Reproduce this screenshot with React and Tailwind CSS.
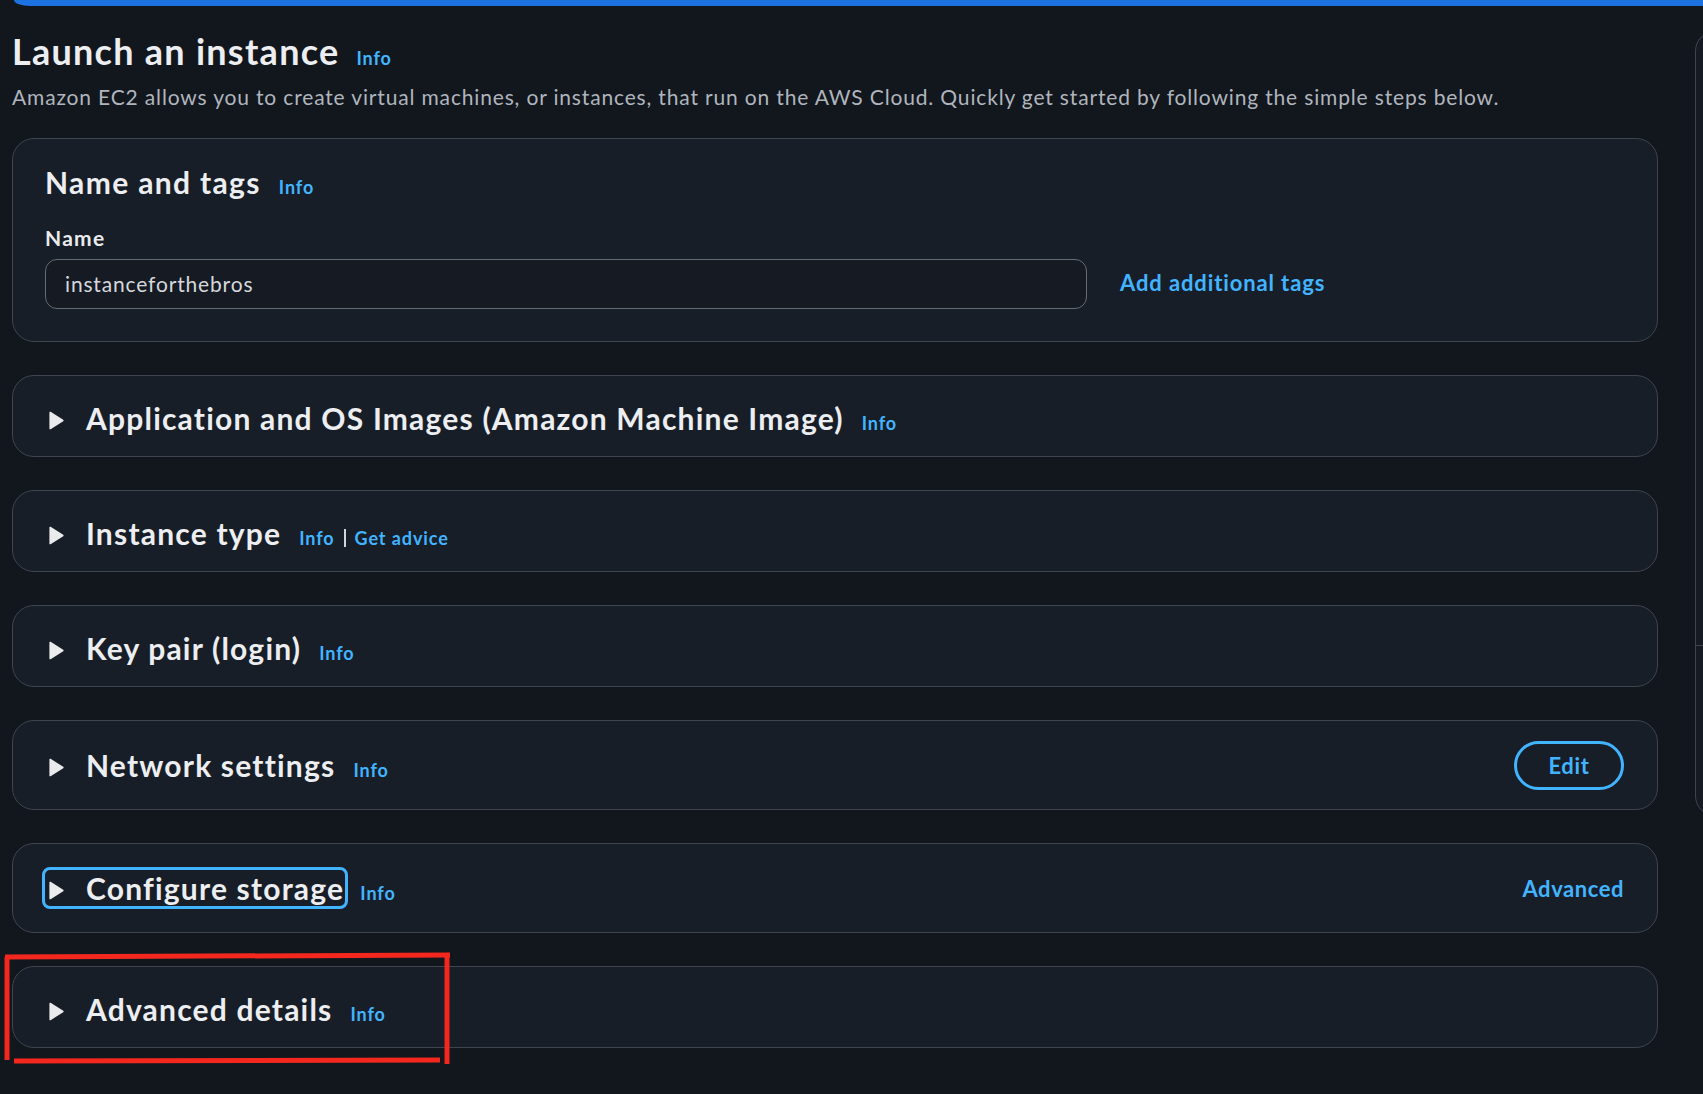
import React from 'react';

const Caret = ({ lift }) => (
  <svg width="15" height="19" viewBox="0 0 15 19" className={`shrink-0 ${lift ? 'mb-[4px]' : 'mb-[2px]'}`}>
    <path d="M1.2 1.5 L13.8 9.5 L1.2 17.5 Z" fill="#e9ebed" stroke="#e9ebed" strokeWidth="1.6" strokeLinejoin="round" />
  </svg>
);

const Info = ({ className = '' }) => (
  <span className={`text-[18px] font-bold tracking-[0.05em] text-[#42b4ff] ${className}`}>Info</span>
);

function Section({ title, focused, extra, action }) {
  // cards without a right-hand action sit their title a touch lower
  const pad = action ? 'py-[19px]' : 'pt-[21px] pb-[17px]';
  return (
    <div className={`flex items-center rounded-[22px] border border-[#3f4550] bg-[#181e27] pl-[29px] pr-[33px] ${pad}`}>
      <div className="flex items-baseline">
        <div
          className={`flex items-baseline rounded-[8px] border-[3px] pl-[4px] pr-[1px] ${
            focused ? 'border-[#42b4ff]' : 'border-transparent'
          }`}
        >
          <Caret lift={!action} />
          <span className="ml-[22px] text-[30px] font-bold leading-[36px] tracking-[0.04em] text-[#eceef1]">
            {title}
          </span>
        </div>
        <Info className={focused ? 'ml-[12px]' : 'ml-[14px]'} />
        {extra}
      </div>
      {action && <div className="ml-auto flex h-[50px] items-center">{action}</div>}
    </div>
  );
}

export default function App() {
  return (
    <div className="relative h-[1094px] w-[1703px] overflow-hidden bg-[#12171e] font-[Lato,sans-serif]">
      {/* top progress bar */}
      <div className="ml-[14px] h-[6px] rounded-bl-[16px_6px] bg-[#1b72e0]" />

      <div className="flex">
        <div className="w-[1658px] shrink-0 pl-[12px]">
          <div className="mt-[23px] flex items-baseline">
            <h1 className="text-[36px] font-bold leading-[44px] tracking-[0.035em] text-[#eceef1]">
              Launch an instance
            </h1>
            <Info className="ml-[17px]" />
          </div>
          <p className="mt-[10px] text-[21px] leading-[28px] tracking-[0.04em] text-[#b0b5bd]">
            Amazon EC2 allows you to create virtual machines, or instances, that run on the AWS Cloud. Quickly get
            started by following the simple steps below.
          </p>

          <div className="mt-[27px] flex flex-col gap-[33px]">
            {/* Name and tags */}
            <div className="rounded-[22px] border border-[#3f4550] bg-[#181e27] pb-[32px] pl-[32px] pr-[33px] pt-[25px]">
              <div className="flex items-baseline">
                <h2 className="text-[30px] font-bold leading-[36px] tracking-[0.045em] text-[#eceef1]">
                  Name and tags
                </h2>
                <Info className="ml-[18px]" />
              </div>
              <div className="mt-[25px] text-[21px] font-bold leading-[24px] tracking-[0.06em] text-[#e9ebed]">Name</div>
              <div className="mt-[9px] flex items-center">
                <div className="flex h-[50px] w-[1042px] items-center rounded-[12px] border border-[#656b75] bg-[#161b23] px-[19px] text-[21px] tracking-[0.04em] text-[#d5d8dc]">
                  instanceforthebros
                </div>
                <a className="mb-[4px] ml-[33px] text-[22px] font-bold tracking-[0.04em] text-[#42b4ff]">
                  Add additional tags
                </a>
              </div>
            </div>

            <Section title="Application and OS Images (Amazon Machine Image)" />
            <Section
              title="Instance type"
              extra={
                <span className="flex items-baseline">
                  <span className="mx-[9px] inline-block h-[18px] w-[2px] translate-y-[2px] bg-[#d1d5db]" />
                  <span className="text-[18px] font-bold tracking-[0.05em] text-[#42b4ff]">Get advice</span>
                </span>
              }
            />
            <Section title="Key pair (login)" />
            <Section
              title="Network settings"
              action={
                <button className="flex h-[49px] w-[110px] items-center justify-center rounded-full border-[3px] border-[#42b4ff] text-[22px] font-bold tracking-[0.03em] text-[#42b4ff]">
                  Edit
                </button>
              }
            />
            <Section
              title="Configure storage"
              focused
              action={<a className="text-[22px] font-bold tracking-[0.025em] text-[#42b4ff]">Advanced</a>}
            />
            <Section title="Advanced details" />
          </div>
        </div>

        {/* right side panel, cut off by the window */}
        <div className="ml-[37px] mt-[25px] flex h-[785px] w-[300px] shrink-0 flex-col rounded-l-[20px] border border-[#3f4550] bg-[#161b23]">
          <div className="h-[614px] border-b border-[#3f4550]" />
        </div>
      </div>

      {/* red annotation box */}
      <svg className="pointer-events-none absolute inset-0" width="1703" height="1094">
        <g stroke="#f3271d" strokeWidth="5" fill="none" strokeLinecap="butt">
          <line x1="5" y1="957" x2="450" y2="955" />
          <line x1="7" y1="957" x2="7" y2="1060" />
          <line x1="14" y1="1061" x2="440" y2="1060" />
          <line x1="447" y1="953" x2="447" y2="1064" />
        </g>
      </svg>
    </div>
  );
}
